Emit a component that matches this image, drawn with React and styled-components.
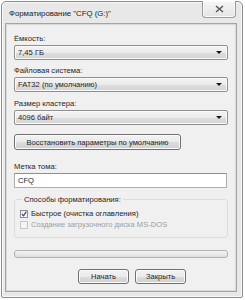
import React from "react";
import styled, { createGlobalStyle } from "styled-components";

const Global = createGlobalStyle`
  html, body {
    margin: 0;
    padding: 0;
    background: #ffffff;
  }
  body {
    font-family: "Liberation Sans", "DejaVu Sans", sans-serif;
    font-size: 7.6px;
    color: #1e1e1e;
  }
`;

const Window = styled.div`
  box-sizing: border-box;
  margin: 1px 0 0 1px;
  width: 242px;
  height: 297px;
  border: 1px solid #8c8c8c;
  border-radius: 5px 5px 2px 2px;
  background: #e8e8e8;
  box-shadow: inset 0 0 0 1px #f8f8f8;
  padding: 0 5px 5px 3px;
  display: flex;
  flex-direction: column;
`;

const TitleBar = styled.div`
  height: 21px;
  display: flex;
  align-items: flex-start;
  justify-content: space-between;
`;

const Title = styled.div`
  padding: 7px 0 0 4px;
  font-size: 7.8px;
  color: #1a1a1a;
`;

const CloseButton = styled.div`
  box-sizing: border-box;
  width: 34px;
  height: 17px;
  margin-top: -1px;
  margin-right: 1px;
  border: 1px solid #9a9a9a;
  border-top: none;
  border-radius: 0 0 4px 4px;
  background: linear-gradient(#f6f6f6, #e4e4e4);
  box-shadow: inset 0 0 0 1px #fbfbfb;
  display: flex;
  align-items: center;
  justify-content: center;
`;

const Client = styled.div`
  flex: 1;
  box-sizing: border-box;
  border: 1px solid #a5a5a5;
  box-shadow: inset 0 0 0 1px #dadada;
  background: #f0f0f0;
  padding: 9px 8px 0 8px;
  display: flex;
  flex-direction: column;
`;

const Label = styled.div`
  height: 11px;
  line-height: 11px;
  margin-top: ${(p) => p.$before || 0}px;
  margin-bottom: 1px;
`;

const Combo = styled.div`
  box-sizing: border-box;
  height: 15px;
  width: 214px;
  border: 1px solid #8f8f8f;
  border-radius: 2px;
  background: linear-gradient(#f3f3f3 0%, #ebebeb 50%, #dddddd 51%, #d5d5d5 100%);
  box-shadow: inset 0 0 0 1px #fafafa;
  display: flex;
  align-items: center;
  justify-content: space-between;
  padding: 0 5px 0 3px;
`;

const Arrow = styled.span`
  width: 0;
  height: 0;
  border-left: 3px solid transparent;
  border-right: 3px solid transparent;
  border-top: 3px solid #1a1a1a;
`;

const Button = styled.div`
  box-sizing: border-box;
  height: ${(p) => p.$h || 16}px;
  width: ${(p) => p.$w}px;
  margin-top: ${(p) => p.$before || 0}px;
  border: 1px solid #707070;
  border-radius: 3px;
  background: linear-gradient(#f2f2f2 0%, #ebebeb 50%, #dddddd 51%, #cfcfcf 100%);
  box-shadow: inset 0 0 0 1px #fbfbfb;
  display: flex;
  align-items: center;
  justify-content: center;
`;

const Input = styled.div`
  box-sizing: border-box;
  height: 15px;
  width: 213px;
  border: 1px solid #abadb3;
  border-top-color: #8e8f8f;
  background: #ffffff;
  display: flex;
  align-items: center;
  padding-left: 3px;
  margin-bottom: 6px;
`;

const Group = styled.fieldset`
  box-sizing: border-box;
  width: 214px;
  height: 44px;
  margin: 0;
  padding: 3px 0 0 5px;
  border: 1px solid #dcdcdc;
  border-radius: 3px;
  display: flex;
  flex-direction: column;
`;

const Legend = styled.legend`
  padding: 0 2px;
  margin-left: 2px;
  line-height: 11px;
`;

const CheckRow = styled.div`
  display: flex;
  align-items: center;
  gap: 3px;
  height: 11px;
  color: ${(p) => (p.$disabled ? "#9d9d9d" : "#1e1e1e")};
`;

const Box = styled.span`
  box-sizing: border-box;
  width: 8px;
  height: 8px;
  border: 1px solid ${(p) => (p.$disabled ? "#c6c6c6" : "#8e8f8f")};
  background: ${(p) => (p.$disabled ? "#f4f4f4" : "linear-gradient(#eaeaea, #ffffff)")};
  display: flex;
  align-items: center;
  justify-content: center;
`;

const Progress = styled.div`
  box-sizing: border-box;
  width: 214px;
  height: 8px;
  margin-top: 12px;
  border: 1px solid #b2b2b2;
  border-radius: 3px;
  background: linear-gradient(#f4f4f4, #dedede);
`;

const Footer = styled.div`
  display: flex;
  gap: 6px;
  margin-top: 11px;
  padding-left: 64px;
`;

export default function App() {
  return (
    <>
      <Global />
      <Window>
        <TitleBar>
          <Title>Форматирование "CFQ (G:)"</Title>
          <CloseButton>
            <svg width="9" height="8" viewBox="0 0 9 8">
              <path d="M1 1 L8 7 M8 1 L1 7" stroke="#5a5a5a" strokeWidth="1.6" fill="none" />
            </svg>
          </CloseButton>
        </TitleBar>
        <Client>
          <Label>Ёмкость:</Label>
          <Combo>
            <span>7,45 ГБ</span>
            <Arrow />
          </Combo>
          <Label $before={5}>Файловая система:</Label>
          <Combo>
            <span>FAT32 (по умолчанию)</span>
            <Arrow />
          </Combo>
          <Label $before={6}>Размер кластера:</Label>
          <Combo>
            <span>4096 байт</span>
            <Arrow />
          </Combo>
          <Button $w={167} $before={9}>Восстановить параметры по умолчанию</Button>
          <Label $before={11}>Метка тома:</Label>
          <Input>CFQ</Input>
          <Group>
            <Legend>Способы форматирования:</Legend>
            <CheckRow>
              <Box>
                <svg width="6" height="6" viewBox="0 0 7 7">
                  <path d="M1 3.5 L3 5.5 L6.2 0.8" stroke="#3a4d75" strokeWidth="1.4" fill="none" />
                </svg>
              </Box>
              Быстрое (очистка оглавления)
            </CheckRow>
            <CheckRow $disabled>
              <Box $disabled />
              Создание загрузочного диска MS-DOS
            </CheckRow>
          </Group>
          <Progress />
          <Footer>
            <Button $w={51} $h={15}>Начать</Button>
            <Button $w={51} $h={15}>Закрыть</Button>
          </Footer>
        </Client>
      </Window>
    </>
  );
}
